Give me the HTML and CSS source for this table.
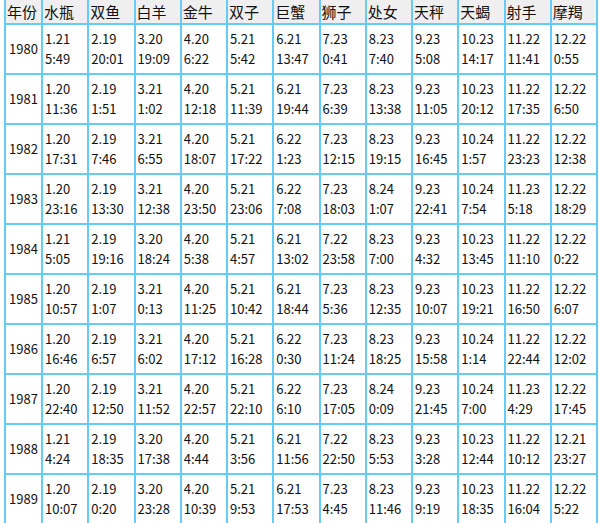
FILE: index.html
```html
<!DOCTYPE html>
<html lang="zh-CN">
<head>
<meta charset="utf-8">
<title>星座日期表</title>
<link rel="stylesheet" href="styles.css">
</head>
<body>
<table class="zodiac">
<colgroup><col class="c-year"><col span="12"></colgroup>
<thead>
<tr class="head"><th>年份</th><th>水瓶</th><th>双鱼</th><th>白羊</th><th>金牛</th><th>双子</th><th>巨蟹</th><th>狮子</th><th>处女</th><th>天秤</th><th>天蝎</th><th>射手</th><th>摩羯</th></tr>
</thead>
<tbody>
<tr><td class="year">1980</td><td>1.21<br>5:49</td><td>2.19<br>20:01</td><td>3.20<br>19:09</td><td>4.20<br>6:22</td><td>5.21<br>5:42</td><td>6.21<br>13:47</td><td>7.23<br>0:41</td><td>8.23<br>7:40</td><td>9.23<br>5:08</td><td>10.23<br>14:17</td><td>11.22<br>11:41</td><td>12.22<br>0:55</td></tr>
<tr><td class="year">1981</td><td>1.20<br>11:36</td><td>2.19<br>1:51</td><td>3.21<br>1:02</td><td>4.20<br>12:18</td><td>5.21<br>11:39</td><td>6.21<br>19:44</td><td>7.23<br>6:39</td><td>8.23<br>13:38</td><td>9.23<br>11:05</td><td>10.23<br>20:12</td><td>11.22<br>17:35</td><td>12.22<br>6:50</td></tr>
<tr><td class="year">1982</td><td>1.20<br>17:31</td><td>2.19<br>7:46</td><td>3.21<br>6:55</td><td>4.20<br>18:07</td><td>5.21<br>17:22</td><td>6.22<br>1:23</td><td>7.23<br>12:15</td><td>8.23<br>19:15</td><td>9.23<br>16:45</td><td>10.24<br>1:57</td><td>11.22<br>23:23</td><td>12.22<br>12:38</td></tr>
<tr><td class="year">1983</td><td>1.20<br>23:16</td><td>2.19<br>13:30</td><td>3.21<br>12:38</td><td>4.20<br>23:50</td><td>5.21<br>23:06</td><td>6.22<br>7:08</td><td>7.23<br>18:03</td><td>8.24<br>1:07</td><td>9.23<br>22:41</td><td>10.24<br>7:54</td><td>11.23<br>5:18</td><td>12.22<br>18:29</td></tr>
<tr><td class="year">1984</td><td>1.21<br>5:05</td><td>2.19<br>19:16</td><td>3.20<br>18:24</td><td>4.20<br>5:38</td><td>5.21<br>4:57</td><td>6.21<br>13:02</td><td>7.22<br>23:58</td><td>8.23<br>7:00</td><td>9.23<br>4:32</td><td>10.23<br>13:45</td><td>11.22<br>11:10</td><td>12.22<br>0:22</td></tr>
<tr><td class="year">1985</td><td>1.20<br>10:57</td><td>2.19<br>1:07</td><td>3.21<br>0:13</td><td>4.20<br>11:25</td><td>5.21<br>10:42</td><td>6.21<br>18:44</td><td>7.23<br>5:36</td><td>8.23<br>12:35</td><td>9.23<br>10:07</td><td>10.23<br>19:21</td><td>11.22<br>16:50</td><td>12.22<br>6:07</td></tr>
<tr><td class="year">1986</td><td>1.20<br>16:46</td><td>2.19<br>6:57</td><td>3.21<br>6:02</td><td>4.20<br>17:12</td><td>5.21<br>16:28</td><td>6.22<br>0:30</td><td>7.23<br>11:24</td><td>8.23<br>18:25</td><td>9.23<br>15:58</td><td>10.24<br>1:14</td><td>11.22<br>22:44</td><td>12.22<br>12:02</td></tr>
<tr><td class="year">1987</td><td>1.20<br>22:40</td><td>2.19<br>12:50</td><td>3.21<br>11:52</td><td>4.20<br>22:57</td><td>5.21<br>22:10</td><td>6.22<br>6:10</td><td>7.23<br>17:05</td><td>8.24<br>0:09</td><td>9.23<br>21:45</td><td>10.24<br>7:00</td><td>11.23<br>4:29</td><td>12.22<br>17:45</td></tr>
<tr><td class="year">1988</td><td>1.21<br>4:24</td><td>2.19<br>18:35</td><td>3.20<br>17:38</td><td>4.20<br>4:44</td><td>5.21<br>3:56</td><td>6.21<br>11:56</td><td>7.22<br>22:50</td><td>8.23<br>5:53</td><td>9.23<br>3:28</td><td>10.23<br>12:44</td><td>11.22<br>10:12</td><td>12.21<br>23:27</td></tr>
<tr><td class="year">1989</td><td>1.20<br>10:07</td><td>2.19<br>0:20</td><td>3.20<br>23:28</td><td>4.20<br>10:39</td><td>5.21<br>9:53</td><td>6.21<br>17:53</td><td>7.23<br>4:45</td><td>8.23<br>11:46</td><td>9.23<br>9:19</td><td>10.23<br>18:35</td><td>11.22<br>16:04</td><td>12.22<br>5:22</td></tr>
</tbody>
</table>
</body>
</html>
```

FILE: styles.css
```css
html, body {
  margin: 0;
  padding: 0;
  background: #ffffff;
}

body {
  font-family: "Noto Sans CJK SC", "Noto Sans", sans-serif;
  color: #111111;
}

.zodiac {
  margin-left: 4px;
  width: 594px;
  table-layout: fixed;
  border-collapse: separate;
  border-spacing: 0;
  border-left: 2px solid #66ccf5;
}

.c-year {
  width: 37px;
}

.zodiac th,
.zodiac td {
  border-right: 2px solid #66ccf5;
  border-bottom: 2px solid #66ccf5;
  padding: 0 0 0 2px;
  text-align: left;
  vertical-align: middle;
  white-space: nowrap;
  overflow: hidden;
}

.zodiac th {
  background: #efefef;
  font-weight: normal;
  font-size: 15px;
  line-height: 23px;
  height: 23px;
  box-sizing: border-box;
  padding-left: 1px;
}

.zodiac td {
  font-size: 13px;
  line-height: 20px;
  height: 50px;
  box-sizing: border-box;
}

.zodiac td.year {
  text-align: center;
  padding: 0;
}
```
